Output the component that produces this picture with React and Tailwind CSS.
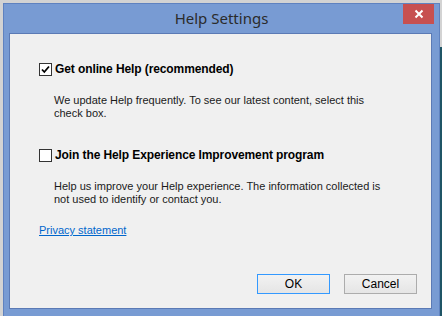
import React from "react";

const CheckBox = ({ checked }) => (
  <span className="flex h-[13px] w-[13px] shrink-0 items-center justify-center border border-[#333333] bg-white">
    {checked && (
      <svg width="11" height="11" viewBox="0 0 11 11">
        <path d="M2 5.5 L4.3 8 L9 2.5" fill="none" stroke="#000" strokeWidth="1.8" />
      </svg>
    )}
  </span>
);

const Option = ({ checked, label, children }) => (
  <div className="flex flex-col">
    <div className="flex items-center gap-[3px]">
      <CheckBox checked={checked} />
      <span className="text-[12px] font-bold leading-[14px] text-black tracking-[-0.1px]">{label}</span>
    </div>
    <p className="ml-[15px] mt-[18px] text-[11px] leading-[13px] text-[#1a1a1a]">{children}</p>
  </div>
);

const App = () => {
  return (
    <div
      className="flex h-[316px] w-[442px] overflow-hidden bg-[#d3d3d3] pl-[3px] pt-[3px]"
      style={{ fontFamily: '"Liberation Sans", Arial, sans-serif' }}
    >
      {/* window */}
      <div className="relative flex h-[320px] w-[437px] flex-col border border-[#5f82c0] bg-[#789bd3] px-[5px]">
        {/* title bar */}
        <div className="flex h-[29px] items-center justify-center">
          <span
            className="text-[15px] text-[#2b2b2b]"
            style={{ fontFamily: '"Noto Sans", "Open Sans", sans-serif' }}
          >
            Help Settings
          </span>
        </div>
        <button className="absolute right-[5px] top-0 flex h-[20px] w-[31px] items-center justify-center bg-[#c75050]">
          <svg width="10" height="10" viewBox="0 0 10 10">
            <path d="M1.5 1.5 L8.5 8.5 M8.5 1.5 L1.5 8.5" stroke="#fff" strokeWidth="2" />
          </svg>
        </button>

        {/* client area */}
        <div className="flex h-[276px] w-[423px] flex-col border border-[#5b7ab5] bg-[#f0f0f0] pl-[29px] pt-[28px]">
          <Option checked label="Get online Help (recommended)">
            We update Help frequently. To see our latest content, select this
            <br />
            check box.
          </Option>
          <div className="mt-[28px]">
            <Option label="Join the Help Experience Improvement program">
              Help us improve your Help experience. The information collected is
              <br />
              not used to identify or contact you.
            </Option>
          </div>
          <a
            href="#"
            className="mt-[17px] self-start text-[11px] leading-[14px] text-[#0066cc] underline"
          >
            Privacy statement
          </a>
          <div className="mt-[37px] flex justify-end gap-[14px] pr-[14px]">
            <button className="h-[20px] w-[73px] border border-[#3399ff] bg-gradient-to-b from-[#f2f2f2] to-[#e5e5e5] text-[12px] text-black">
              OK
            </button>
            <button className="h-[20px] w-[73px] border border-[#acacac] bg-gradient-to-b from-[#f2f2f2] to-[#e5e5e5] text-[12px] text-black">
              Cancel
            </button>
          </div>
        </div>
      </div>
      {/* background window edge */}
      <div className="mt-[44px] h-[280px] w-[2px] bg-[#1f5566]" />
    </div>
  );
};

export default App;
